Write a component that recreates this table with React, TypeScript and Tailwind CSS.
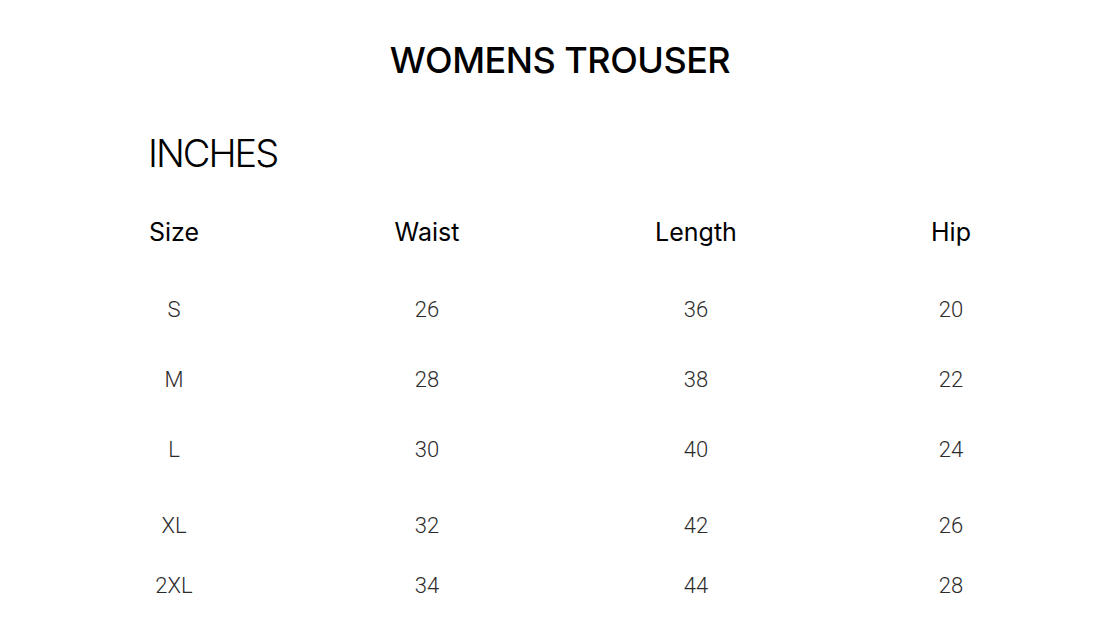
const rows = [
  { size: 'S', waist: '26', length: '36', hip: '20', h: 'h-[76px]' },
  { size: 'M', waist: '28', length: '38', hip: '22', h: 'h-[64px]' },
  { size: 'L', waist: '30', length: '40', hip: '24', h: 'h-[76px]' },
  { size: 'XL', waist: '32', length: '42', hip: '26', h: 'h-[76px]' },
  { size: '2XL', waist: '34', length: '44', hip: '28', h: 'h-[44px]' },
];

const cols = 'grid grid-cols-[252px_254px_284px_226px] items-center text-center';

export default function App() {
  return (
    <div className="w-[1120px] h-[642px] bg-white font-['Inter',sans-serif] text-black overflow-hidden">
      {/* title */}
      <h1 className="pt-[38px] text-center text-[36px] leading-[44px] font-medium tracking-[-0.5px]">
        WOMENS TROUSER
      </h1>

      <div className="pl-[148px] mt-[47px]">
        <h2 className="text-[38px] leading-[48px] font-light tracking-[-2px]">INCHES</h2>
      </div>

      {/* size table */}
      <div className="ml-[48px] mt-[18px]">
        <div className={`${cols} h-[76px] text-[25px]`}>
          <div>Size</div>
          <div>Waist</div>
          <div>Length</div>
          <div>Hip</div>
        </div>
        {rows.map((r) => (
          <div
            key={r.size}
            className={`${cols} ${r.h} text-[22px] text-[#2b2b2b] font-light font-['Roboto',sans-serif]`}
          >
            <div>{r.size}</div>
            <div>{r.waist}</div>
            <div>{r.length}</div>
            <div>{r.hip}</div>
          </div>
        ))}
      </div>
    </div>
  );
}
